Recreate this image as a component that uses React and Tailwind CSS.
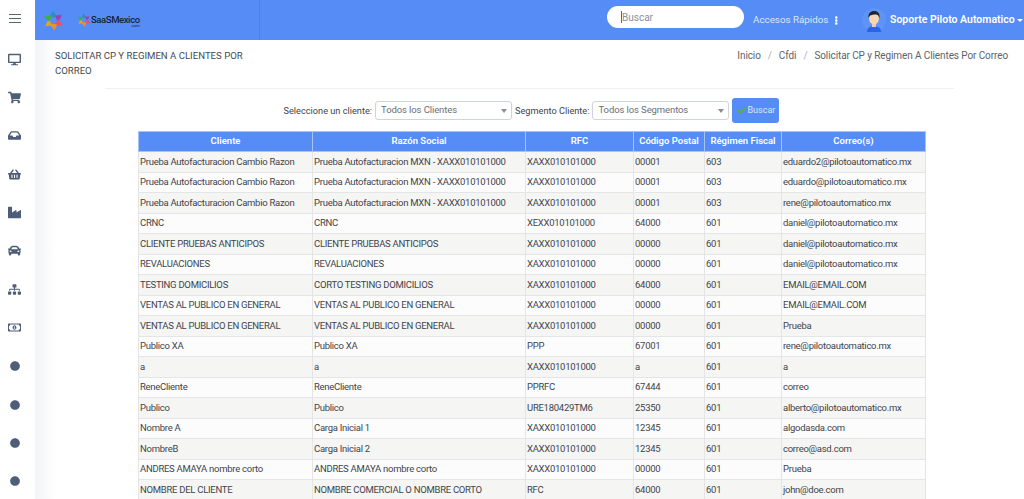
import React from "react";
import { FaDesktop, FaShoppingCart, FaInbox, FaShoppingBasket, FaIndustry, FaCar, FaSitemap, FaRegMoneyBillAlt, FaCircle, FaCheck, FaEllipsisV } from "react-icons/fa";

const rows = [
  ["Prueba Autofacturacion Cambio Razon","Prueba Autofacturacion MXN - XAXX010101000","XAXX010101000","00001","603","eduardo2@pilotoautomatico.mx"],
  ["Prueba Autofacturacion Cambio Razon","Prueba Autofacturacion MXN - XAXX010101000","XAXX010101000","00001","603","eduardo@pilotoautomatico.mx"],
  ["Prueba Autofacturacion Cambio Razon","Prueba Autofacturacion MXN - XAXX010101000","XAXX010101000","00001","603","rene@pilotoautomatico.mx"],
  ["CRNC","CRNC","XEXX010101000","64000","601","daniel@pilotoautomatico.mx"],
  ["CLIENTE PRUEBAS ANTICIPOS","CLIENTE PRUEBAS ANTICIPOS","XAXX010101000","00000","601","daniel@pilotoautomatico.mx"],
  ["REVALUACIONES","REVALUACIONES","XAXX010101000","00000","601","daniel@pilotoautomatico.mx"],
  ["TESTING DOMICILIOS","CORTO TESTING DOMICILIOS","XAXX010101000","64000","601","EMAIL@EMAIL.COM"],
  ["VENTAS AL PUBLICO EN GENERAL","VENTAS AL PUBLICO EN GENERAL","XAXX010101000","00000","601","EMAIL@EMAIL.COM"],
  ["VENTAS AL PUBLICO EN GENERAL","VENTAS AL PUBLICO EN GENERAL","XAXX010101000","00000","601","Prueba"],
  ["Publico XA","Publico XA","PPP","67001","601","rene@pilotoautomatico.mx"],
  ["a","a","XAXX010101000","a","601","a"],
  ["ReneCliente","ReneCliente","PPRFC","67444","601","correo"],
  ["Publico","Publico","URE180429TM6","25350","601","alberto@pilotoautomatico.mx"],
  ["Nombre A","Carga Inicial 1","XAXX010101000","12345","601","algodasda.com"],
  ["NombreB","Carga Inicial 2","XAXX010101000","12345","601","correo@asd.com"],
  ["ANDRES AMAYA nombre corto","ANDRES AMAYA nombre corto","XAXX010101000","00000","601","Prueba"],
  ["NOMBRE DEL CLIENTE","NOMBRE COMERCIAL O NOMBRE CORTO","RFC","64000","601","john@doe.com"],
];

const headers = ["Cliente","Razón Social","RFC","Código Postal","Régimen Fiscal","Correo(s)"];
const sideIcons = [FaDesktop, FaShoppingCart, FaInbox, FaShoppingBasket, FaIndustry, FaCar, FaSitemap, FaRegMoneyBillAlt, FaCircle, FaCircle, FaCircle, FaCircle];

function Star({ size }) {
  const cols = ["#2f8fc0","#a03fb5","#e8506f","#f2901c","#e8a020","#3fae49"];
  return (
    <svg width={size} height={size} viewBox="0 0 24 24" className="shrink-0">
      {cols.map((c, i) => (
        <polygon key={i} points="11,0.5 15.500,6.500 14,8.500 8,7.500" fill={c} transform={`rotate(${i * 60} 12 12)`} />
      ))}
    </svg>
  );
}

function Avatar() {
  return (
    <svg width="24" height="24" viewBox="0 0 24 24">
      <circle cx="12" cy="12" r="12" fill="#5f93f6" />
      <path d="M5 24c0-4 3-6 7-6s7 2 7 6z" fill="#2a63e8" />
      <rect x="10" y="14" width="4" height="5" fill="#f4c9a0" />
      <ellipse cx="12" cy="10.500" rx="5" ry="6" fill="#f8d6b3" />
      <path d="M6.500 10c-.6-5 2.500-7 5.500-7s6 1.500 5.500 7c-1-2.500-2-3.500-3.500-3.500s-5 .5-6 1z" fill="#1b2533" />
    </svg>
  );
}

function Select({ label, w }) {
  return (
    <div className={`${w} h-[19px] bg-white border border-[#cfd4da] rounded-[3px] flex items-center justify-between pl-[5px] pr-[4px] text-[9.500px] tracking-[-0.1px] text-[#6a6f76]`}>
      <span>{label}</span>
      <span className="w-0 h-0 border-l-[3px] border-r-[3px] border-t-[4px] border-l-transparent border-r-transparent border-t-[#8a8f96]" />
    </div>
  );
}

export default function App() {
  return (
    <div className="h-[499px] w-full overflow-hidden flex bg-white font-['Roboto','Liberation_Sans',sans-serif] text-[#3f444b]">
      <aside className="w-[35px] shrink-0 flex flex-col items-center pr-[6px] bg-white">
        <div className="h-[40px] flex flex-col justify-center gap-[2.500px] pb-[3px] shrink-0">
          <span className="block w-[12px] h-[1.500px] bg-[#5b6470]" />
          <span className="block w-[12px] h-[1.500px] bg-[#5b6470]" />
          <span className="block w-[12px] h-[1.500px] bg-[#5b6470]" />
        </div>
        <div className="flex flex-col items-center gap-[24.400px] pt-[12px]">
          {sideIcons.map((I, i) => (
            <div key={i} className="h-[14px] flex items-center justify-center text-[#4e5d78]">
              <I size={i >= 8 ? 10 : 13} />
            </div>
          ))}
        </div>
      </aside>
      <div className="flex-1 min-w-0 flex flex-col">
        <header className="h-[40px] shrink-0 bg-[#568cf6] flex items-center">
          <div className="w-[225px] h-full shrink-0 border-r border-[#4c81e8] flex items-center pl-[8px]">
            <Star size={21} />
            <div className="ml-[13px] flex items-center relative">
              <Star size={14} />
              <span className="text-[9.500px] leading-none font-medium text-[#16233a] tracking-[-0.4px]">SaaSMexico</span>
              <span className="absolute right-0 top-[11px] text-[4px] leading-none text-[#16233a]">.com</span>
            </div>
          </div>
          <div className="w-[347px] shrink-0" />
          <div className="w-[137px] h-[22px] shrink-0 bg-white rounded-full flex items-center pl-[14px] text-[10px] text-[#8a8f96] mb-[6px]">
            <span className="w-px h-[12px] bg-[#666]" />Buscar
          </div>
          <div className="ml-[9px] w-[88px] shrink-0 text-[9.800px] text-[#dbe6fd] flex items-center gap-[4px] whitespace-nowrap">
            Accesos Rápidos <FaEllipsisV size={9} className="text-white" />
          </div>
          <div className="ml-[21px] shrink-0"><Avatar /></div>
          <div className="ml-[4px] text-[10.500px] font-semibold text-white whitespace-nowrap flex items-center gap-[2px]">
            Soporte Piloto Automatico
            <span className="w-0 h-0 border-l-[3px] border-r-[3px] border-t-[3px] border-l-transparent border-r-transparent border-t-white" />
          </div>
        </header>
        <main className="flex-1 min-h-0 bg-gradient-to-r from-[#f3f4f6] to-white to-[2%]">
          <div className="flex justify-between pl-[20px] pr-[16px] pt-[8px] h-[48px]">
            <h1 className="w-[210px] text-[9.600px] leading-[15px] text-[#444a52] uppercase">Solicitar CP y Regimen a Clientes por Correo</h1>
            <nav className="text-[10px] leading-[15px] text-[#5d636b] flex gap-[7px] whitespace-nowrap tracking-[-0.1px]">
              <span>Inicio</span><span className="text-[#aab0b7]">/</span>
              <span>Cfdi</span><span className="text-[#aab0b7]">/</span>
              <span>Solicitar CP y Regimen A Clientes Por Correo</span>
            </nav>
          </div>
          <div className="mx-[70px] border-t border-[#eef0f2]" />
          <div className="flex justify-center items-center gap-[3px] h-[27px] mt-[8px] ml-[4px] text-[9.200px] text-[#3f444b]">
            <span>Seleccione un cliente:</span>
            <Select label="Todos los Clientes" w="w-[137px]" />
            <span>Segmento Cliente:</span>
            <Select label="Todos los Segmentos" w="w-[137px]" />
            <button className="w-[47px] h-[25px] rounded-[3px] bg-[#568cf6] flex items-center justify-center gap-[2px] text-[9px] text-[#dce7fd]">
              <FaCheck size={9} className="text-[#5cb531]" />Buscar
            </button>
          </div>
          <table className="table-fixed border-collapse ml-[103px] mt-[7px] w-[787px] text-[9.500px] tracking-[-0.27px] text-[#3f444b]">
            <colgroup>
              <col className="w-[174px]" /><col className="w-[213px]" /><col className="w-[108px]" />
              <col className="w-[71px]" /><col className="w-[77px]" /><col className="w-[144px]" />
            </colgroup>
            <thead>
              <tr className="h-[20px] bg-[#568cf6]">
                {headers.map((h) => (
                  <th key={h} className="border border-[#a9c3f7] text-white font-semibold tracking-normal text-center px-0 whitespace-nowrap">{h}</th>
                ))}
              </tr>
            </thead>
            <tbody>
              {rows.map((r, i) => (
                <tr key={i} className={`h-[20.500px] ${i % 2 === 0 ? "bg-[#f5f5f4]" : "bg-[#fcfcfd]"}`}>
                  {r.map((c, j) => (
                    <td key={j} className="border border-[#e4e5e7] px-[1px] py-0 whitespace-nowrap overflow-hidden">{c}</td>
                  ))}
                </tr>
              ))}
            </tbody>
          </table>
        </main>
      </div>
    </div>
  );
}
